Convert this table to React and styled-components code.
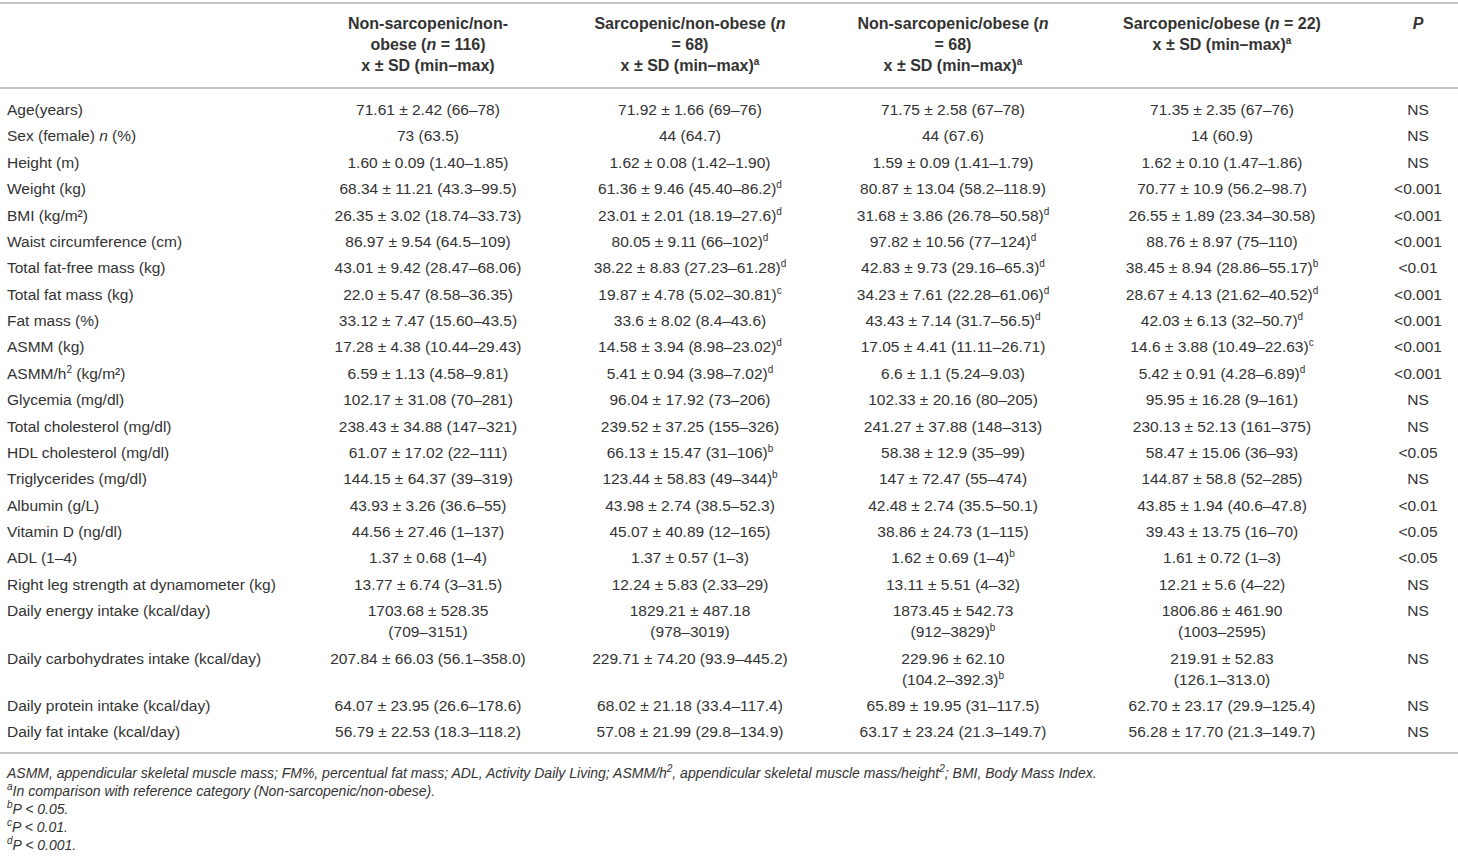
import * as React from 'react';
import styled, { createGlobalStyle } from 'styled-components';

const GlobalStyle = createGlobalStyle`
  html, body {
    margin: 0;
    padding: 0;
    background: #ffffff;
  }
  body {
    font-family: "Liberation Sans", Arial, sans-serif;
    color: #333333;
  }
`;

const Page = styled.div`
  width: 1458px;
  padding-top: 2px;
`;

const Table = styled.table`
  width: 1458px;
  border-collapse: collapse;
  table-layout: fixed;
  font-size: 15.5px;
  line-height: 21px;
`;

const Head = styled.thead`
  border-top: 2px solid #c4c4c4;
  border-bottom: 2px solid #c4c4c4;
`;

const Body = styled.tbody`
  border-bottom: 2px solid #c4c4c4;

  tr:first-child td {
    padding-top: 10px;
  }
  tr:last-child td {
    padding-bottom: 10px;
  }
`;

const Th = styled.th`
  font-size: 16px;
  font-weight: 700;
  text-align: center;
  vertical-align: top;
  white-space: nowrap;
  padding: 9px 0 11px;
`;

const Td = styled.td`
  text-align: ${(p) => (p.$left ? 'left' : 'center')};
  padding: 2.7px 0 2.7px ${(p) => (p.$left ? '7px' : '0')};
  vertical-align: top;
  white-space: nowrap;
`;

const Sup = styled.sup`
  font-size: 10px;
  line-height: 0;
  vertical-align: 6px;
`;

const Notes = styled.div`
  padding: 10px 0 0 7px;
  font-size: 14px;
  line-height: 18px;
  font-style: italic;
`;

const Note = styled.div`
  white-space: nowrap;
`;

const widths = [316, 224, 300, 226, 312, 80];

const rows = [
  ['Age(years)', '71.61 ± 2.42 (66–78)', '71.92 ± 1.66 (69–76)', '71.75 ± 2.58 (67–78)', '71.35 ± 2.35 (67–76)', 'NS'],
  [<>Sex (female) <i>n</i> (%)</>, '73 (63.5)', '44 (64.7)', '44 (67.6)', '14 (60.9)', 'NS'],
  ['Height (m)', '1.60 ± 0.09 (1.40–1.85)', '1.62 ± 0.08 (1.42–1.90)', '1.59 ± 0.09 (1.41–1.79)', '1.62 ± 0.10 (1.47–1.86)', 'NS'],
  ['Weight (kg)', '68.34 ± 11.21 (43.3–99.5)', '61.36 ± 9.46 (45.40–86.2)^d', '80.87 ± 13.04 (58.2–118.9)', '70.77 ± 10.9 (56.2–98.7)', '<0.001'],
  ['BMI (kg/m²)', '26.35 ± 3.02 (18.74–33.73)', '23.01 ± 2.01 (18.19–27.6)^d', '31.68 ± 3.86 (26.78–50.58)^d', '26.55 ± 1.89 (23.34–30.58)', '<0.001'],
  ['Waist circumference (cm)', '86.97 ± 9.54 (64.5–109)', '80.05 ± 9.11 (66–102)^d', '97.82 ± 10.56 (77–124)^d', '88.76 ± 8.97 (75–110)', '<0.001'],
  ['Total fat-free mass (kg)', '43.01 ± 9.42 (28.47–68.06)', '38.22 ± 8.83 (27.23–61.28)^d', '42.83 ± 9.73 (29.16–65.3)^d', '38.45 ± 8.94 (28.86–55.17)^b', '<0.01'],
  ['Total fat mass (kg)', '22.0 ± 5.47 (8.58–36.35)', '19.87 ± 4.78 (5.02–30.81)^c', '34.23 ± 7.61 (22.28–61.06)^d', '28.67 ± 4.13 (21.62–40.52)^d', '<0.001'],
  ['Fat mass (%)', '33.12 ± 7.47 (15.60–43.5)', '33.6 ± 8.02 (8.4–43.6)', '43.43 ± 7.14 (31.7–56.5)^d', '42.03 ± 6.13 (32–50.7)^d', '<0.001'],
  ['ASMM (kg)', '17.28 ± 4.38 (10.44–29.43)', '14.58 ± 3.94 (8.98–23.02)^d', '17.05 ± 4.41 (11.11–26.71)', '14.6 ± 3.88 (10.49–22.63)^c', '<0.001'],
  [<>ASMM/h<Sup>2</Sup> (kg/m²)</>, '6.59 ± 1.13 (4.58–9.81)', '5.41 ± 0.94 (3.98–7.02)^d', '6.6 ± 1.1 (5.24–9.03)', '5.42 ± 0.91 (4.28–6.89)^d', '<0.001'],
  ['Glycemia (mg/dl)', '102.17 ± 31.08 (70–281)', '96.04 ± 17.92 (73–206)', '102.33 ± 20.16 (80–205)', '95.95 ± 16.28 (9–161)', 'NS'],
  ['Total cholesterol (mg/dl)', '238.43 ± 34.88 (147–321)', '239.52 ± 37.25 (155–326)', '241.27 ± 37.88 (148–313)', '230.13 ± 52.13 (161–375)', 'NS'],
  ['HDL cholesterol (mg/dl)', '61.07 ± 17.02 (22–111)', '66.13 ± 15.47 (31–106)^b', '58.38 ± 12.9 (35–99)', '58.47 ± 15.06 (36–93)', '<0.05'],
  ['Triglycerides (mg/dl)', '144.15 ± 64.37 (39–319)', '123.44 ± 58.83 (49–344)^b', '147 ± 72.47 (55–474)', '144.87 ± 58.8 (52–285)', 'NS'],
  ['Albumin (g/L)', '43.93 ± 3.26 (36.6–55)', '43.98 ± 2.74 (38.5–52.3)', '42.48 ± 2.74 (35.5–50.1)', '43.85 ± 1.94 (40.6–47.8)', '<0.01'],
  ['Vitamin D (ng/dl)', '44.56 ± 27.46 (1–137)', '45.07 ± 40.89 (12–165)', '38.86 ± 24.73 (1–115)', '39.43 ± 13.75 (16–70)', '<0.05'],
  ['ADL (1–4)', '1.37 ± 0.68 (1–4)', '1.37 ± 0.57 (1–3)', '1.62 ± 0.69 (1–4)^b', '1.61 ± 0.72 (1–3)', '<0.05'],
  ['Right leg strength at dynamometer (kg)', '13.77 ± 6.74 (3–31.5)', '12.24 ± 5.83 (2.33–29)', '13.11 ± 5.51 (4–32)', '12.21 ± 5.6 (4–22)', 'NS'],
  ['Daily energy intake (kcal/day)', '1703.68 ± 528.35\n(709–3151)', '1829.21 ± 487.18\n(978–3019)', '1873.45 ± 542.73\n(912–3829)^b', '1806.86 ± 461.90\n(1003–2595)', 'NS'],
  ['Daily carbohydrates intake (kcal/day)', '207.84 ± 66.03 (56.1–358.0)', '229.71 ± 74.20 (93.9–445.2)', '229.96 ± 62.10\n(104.2–392.3)^b', '219.91 ± 52.83\n(126.1–313.0)', 'NS'],
  ['Daily protein intake (kcal/day)', '64.07 ± 23.95 (26.6–178.6)', '68.02 ± 21.18 (33.4–117.4)', '65.89 ± 19.95 (31–117.5)', '62.70 ± 23.17 (29.9–125.4)', 'NS'],
  ['Daily fat intake (kcal/day)', '56.79 ± 22.53 (18.3–118.2)', '57.08 ± 21.99 (29.8–134.9)', '63.17 ± 23.24 (21.3–149.7)', '56.28 ± 17.70 (21.3–149.7)', 'NS'],
];

// "text^x" -> text with superscript x, "\n" -> line break
function Value({ text }) {
  if (typeof text !== 'string') return text;
  const [main, sup] = text.split('^');
  const lines = main.split('\n');
  return (
    <>
      {lines.map((line, i) => (
        <React.Fragment key={i}>
          {i > 0 && <br />}
          {line}
        </React.Fragment>
      ))}
      {sup && <Sup>{sup}</Sup>}
    </>
  );
}

export default function App() {
  return (
    <Page>
      <GlobalStyle />
      <Table>
        <colgroup>
          {widths.map((w, i) => (
            <col key={i} style={{ width: w }} />
          ))}
        </colgroup>
        <Head>
          <tr>
            <Th />
            <Th>
              Non-sarcopenic/non-
              <br />
              obese (<i>n</i> = 116)
              <br />x ± SD (min–max)
            </Th>
            <Th>
              Sarcopenic/non-obese (<i>n</i>
              <br />= 68)
              <br />x ± SD (min–max)<Sup>a</Sup>
            </Th>
            <Th>
              Non-sarcopenic/obese (<i>n</i>
              <br />= 68)
              <br />x ± SD (min–max)<Sup>a</Sup>
            </Th>
            <Th>
              Sarcopenic/obese (<i>n</i> = 22)
              <br />x ± SD (min–max)<Sup>a</Sup>
            </Th>
            <Th>
              <i>P</i>
            </Th>
          </tr>
        </Head>
        <Body>
          {rows.map((row, r) => (
            <tr key={r}>
              {row.map((cell, c) => (
                <Td key={c} $left={c === 0}>
                  <Value text={cell} />
                </Td>
              ))}
            </tr>
          ))}
        </Body>
      </Table>
      <Notes>
        <Note>
          ASMM, appendicular skeletal muscle mass; FM%, percentual fat mass; ADL, Activity Daily Living;
          ASMM/h<Sup>2</Sup>, appendicular skeletal muscle mass/height<Sup>2</Sup>; BMI, Body Mass Index.
        </Note>
        <Note>
          <Sup>a</Sup>In comparison with reference category (Non-sarcopenic/non-obese).
        </Note>
        <Note>
          <Sup>b</Sup>P &lt; 0.05.
        </Note>
        <Note>
          <Sup>c</Sup>P &lt; 0.01.
        </Note>
        <Note>
          <Sup>d</Sup>P &lt; 0.001.
        </Note>
      </Notes>
    </Page>
  );
}
